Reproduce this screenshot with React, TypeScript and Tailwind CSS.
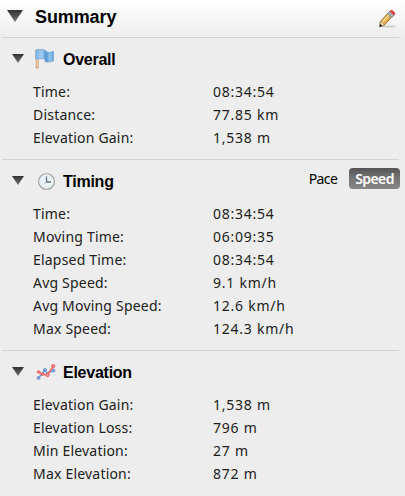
import { useState, type ReactNode } from "react";

interface Stat {
  label: string;
  value: string;
}

const overall: Stat[] = [
  { label: "Time:", value: "08:34:54" },
  { label: "Distance:", value: "77.85 km" },
  { label: "Elevation Gain:", value: "1,538 m" },
];

const timing: Stat[] = [
  { label: "Time:", value: "08:34:54" },
  { label: "Moving Time:", value: "06:09:35" },
  { label: "Elapsed Time:", value: "08:34:54" },
  { label: "Avg Speed:", value: "9.1 km/h" },
  { label: "Avg Moving Speed:", value: "12.6 km/h" },
  { label: "Max Speed:", value: "124.3 km/h" },
];

const elevation: Stat[] = [
  { label: "Elevation Gain:", value: "1,538 m" },
  { label: "Elevation Loss:", value: "796 m" },
  { label: "Min Elevation:", value: "27 m" },
  { label: "Max Elevation:", value: "872 m" },
];

function Triangle({ className }: { className: string }) {
  return (
    <svg viewBox="0 0 16 12" preserveAspectRatio="none" className={className}>
      <defs>
        <linearGradient id="tri" x1="0" y1="0" x2="0" y2="1">
          <stop offset="0" stopColor="#303030" />
          <stop offset="1" stopColor="#747474" />
        </linearGradient>
      </defs>
      <path d="M0 0h16L8 12z" fill="url(#tri)" />
    </svg>
  );
}

function FlagIcon() {
  return (
    <svg viewBox="0 0 20 20" className="h-5 w-5">
      <defs>
        <linearGradient id="flag" x1="0" y1="0" x2="1" y2="0">
          <stop offset="0" stopColor="#7fb5e2" />
          <stop offset="0.35" stopColor="#a3cff1" />
          <stop offset="0.58" stopColor="#5596d2" />
          <stop offset="0.8" stopColor="#90c5ec" />
          <stop offset="1" stopColor="#62a3d9" />
        </linearGradient>
      </defs>
      <path d="M1.200 1v18h2V1z" fill="#fbe3c8" stroke="#c88a55" strokeWidth="0.8" />
      <path
        d="M.8 1.200c3.500-1 7-1 10 .2v1.200c3 1 5 .8 7.700-.3v9.500c-3 1.500-5.500 1.700-8.500.7V10.300c-2-.9-6-.8-9.200 0z"
        fill="url(#flag)"
        stroke="#5e99ce"
        strokeWidth="0.600"
      />
    </svg>
  );
}

function ClockIcon() {
  return (
    <svg viewBox="0 0 20 20" className="h-5 w-5">
      <circle cx="10.500" cy="10.500" r="7.900" fill="#fafcfd" stroke="#a8a8a8" strokeWidth="1.400" />
      <circle cx="10.500" cy="10.500" r="6.400" fill="#e9f3fa" stroke="#dfe6ea" strokeWidth="0.8" />
      <path d="M10.500 5.500v5.500h4.500" fill="none" stroke="#6a737a" strokeWidth="1.300" />
      <path d="M10.500 11l-3 2" stroke="#a9b3bb" strokeWidth="0.8" />
    </svg>
  );
}

function ChartIcon() {
  return (
    <svg viewBox="0 0 20 20" className="h-5 w-5" fill="none">
      <path d="M2.500 16l6-7.500 3 2.500 6.500-2.500" stroke="#6696d2" strokeWidth="1.500" />
      <g fill="#8db4e4" stroke="#5a8ccc" strokeWidth="1">
        <circle cx="2.500" cy="16" r="1.400" />
        <circle cx="9" cy="8" r="1.400" />
        <circle cx="17.500" cy="8.500" r="1.400" />
      </g>
      <path d="M2.500 10l4 2.200 5 .6 6-8.800" stroke="#f06a6a" strokeWidth="1.700" />
      <g fill="#f78f8f" stroke="#ed5d5d" strokeWidth="1">
        <circle cx="2.500" cy="10" r="1.300" />
        <circle cx="6.500" cy="12.200" r="1.300" />
        <circle cx="11.500" cy="13" r="1.700" />
        <circle cx="17.300" cy="4" r="1.600" />
      </g>
    </svg>
  );
}

function PencilIcon() {
  return (
    <svg viewBox="0 0 18 18" className="h-[18px] w-[18px]">
      <ellipse cx="9.500" cy="16.500" rx="7.500" ry="1" fill="#b5b5b5" opacity="0.6" />
      <path d="M.8 16.700l.5-5L9 3l4 3.500-7.500 8.500z" fill="#e6ae4c" stroke="#8b6534" strokeWidth="0.9" />
      <path d="M3.200 12.300l7-7.800" stroke="#ffe093" strokeWidth="1.500" />
      <path d="M.8 16.700l.5-5 2 .6 2.200 2.700z" fill="#efd9b5" stroke="#8b6534" strokeWidth="0.5" />
      <path d="M.6 17l.4-3.200 2.300 2.100z" fill="#1c1c1c" />
      <path d="M8.300 3.800l2.400-2.600 4.400 4-2.200 2.600z" fill="#aab0b5" stroke="#747b80" strokeWidth="0.7" />
      <path d="M10.700 1.200l.8-.8c1.800-.6 4.800 1.800 4.500 3.600l-1 1.200z" fill="#ec3a3a" stroke="#b94b4b" strokeWidth="0.5" />
    </svg>
  );
}

interface SectionProps {
  title: string;
  icon: ReactNode;
  stats: Stat[];
  action?: ReactNode;
}

function Section({ title, icon, stats, action }: SectionProps) {
  return (
    <section className="mr-[6px] ml-[2px] border-b border-[#d2d2d2] pb-[10px] last:border-b-0">
      <div className="flex h-[42px] items-center">
        <Triangle className="mb-[2px] ml-[10px] h-[9px] w-3 shrink-0" />
        <div className="ml-[10px] w-[23px]">{icon}</div>
        <h2 className="ml-[6px] flex-1 pt-px font-['Liberation_Sans',sans-serif] text-[16px] leading-5 font-bold tracking-[-0.25px] text-black">
          {title}
        </h2>
        {action}
      </div>
      <dl>
        {stats.map((s) => (
          <div key={s.label} className="flex h-[23px] items-center pl-[31px] leading-[23px]">
            <dt className="w-[180px] shrink-0 tracking-[0.2px]">{s.label}</dt>
            <dd className="tracking-[0.75px]">{s.value}</dd>
          </div>
        ))}
      </dl>
    </section>
  );
}

function RateToggle() {
  const [rate, setRate] = useState("Speed");
  return (
    <div className="-mr-px flex h-[21px] -translate-y-[3px] gap-1">
      {["Pace", "Speed"].map((r) => (
        <button
          key={r}
          onClick={() => setRate(r)}
          className={`h-[21px] rounded-[4px] text-[14px] leading-[21px] ${
            rate === r
              ? "w-[51px] bg-linear-to-b from-[#555] via-[#767676] to-[#858585] font-semibold tracking-[-0.6px] text-white"
              : "w-[44px] tracking-[-0.6px] text-black"
          }`}
        >
          {r}
        </button>
      ))}
    </div>
  );
}

export default function App() {
  return (
    <div className="h-[496px] w-[405px] overflow-hidden bg-[#ededed] font-['Noto_Sans',sans-serif] text-[14px] text-[#202020]">
      <header className="bg-linear-to-b from-white to-[#ededed]">
        <div className="mr-[6px] ml-[2px] flex h-[38px] items-center border-b border-[#d2d2d2]">
          <Triangle className="ml-[5px] h-3 w-4 -translate-y-[3px]" />
          <h1 className="ml-3 flex-1 -translate-y-px font-['Liberation_Sans',sans-serif] text-[18px] font-bold tracking-[-0.1px] text-black">
            Summary
          </h1>
          <button className="mr-[2px]" aria-label="Edit">
            <PencilIcon />
          </button>
        </div>
      </header>
      <Section title="Overall" icon={<div className="pl-px"><FlagIcon /></div>} stats={overall} />
      <Section title="Timing" icon={<div className="pl-[2px]"><ClockIcon /></div>} stats={timing} action={<RateToggle />} />
      <Section title="Elevation" icon={<div className="pl-[2px]"><ChartIcon /></div>} stats={elevation} />
    </div>
  );
}
